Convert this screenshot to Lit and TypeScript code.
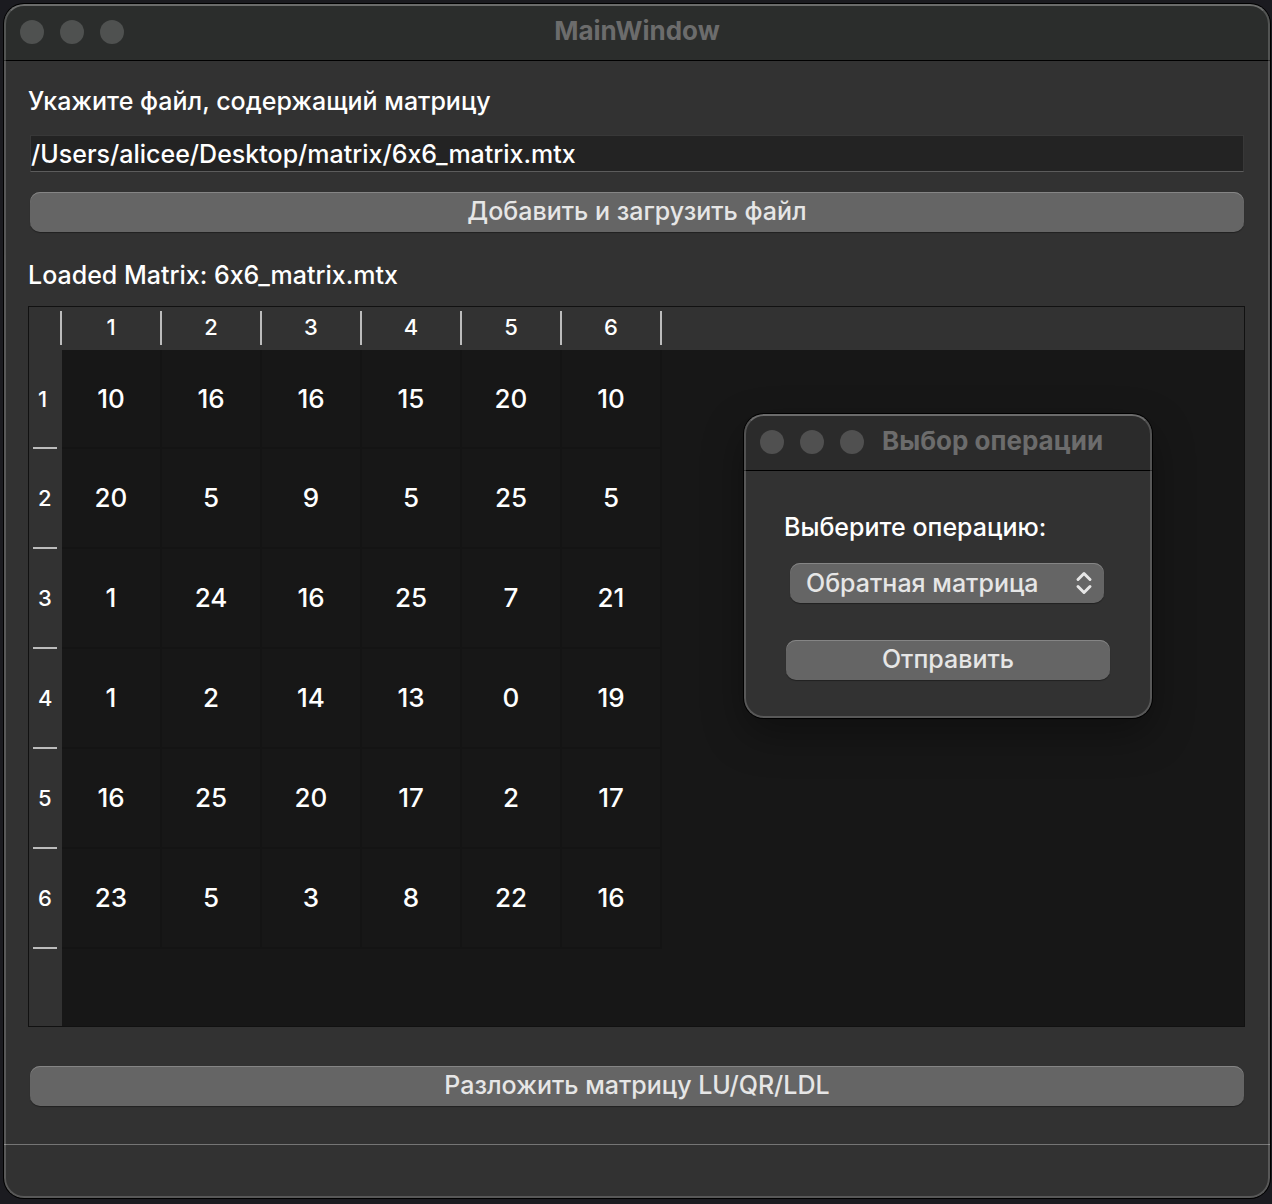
import { LitElement, html, css } from "lit";
import { customElement, state } from "lit/decorators.js";

const chrome = css`
  * {
    box-sizing: border-box;
  }
  .window {
    position: relative;
    display: flex;
    flex-direction: column;
    overflow: hidden;
    border-radius: 20px;
    background: #323232;
  }
  .window::after {
    content: "";
    position: absolute;
    inset: 0;
    border: 2px solid rgba(255, 255, 255, 0.19);
    border-top-color: rgba(255, 255, 255, 0.3);
    border-radius: 20px;
    pointer-events: none;
  }
  .titlebar {
    display: grid;
    align-items: center;
    height: 57px;
    padding: 0 16px;
    border-bottom: 1px solid #000;
    background: #2b2b2b;
  }
  .lights {
    display: flex;
    gap: 16px;
  }
  .light {
    width: 24px;
    height: 24px;
    border-radius: 50%;
    background: #505050;
  }
  .title {
    margin: 0;
    padding-bottom: 2px;
    font-size: 26px;
    line-height: 32px;
    font-weight: 700;
    color: #6c6c6c;
    white-space: nowrap;
  }
  .push {
    display: block;
    width: 100%;
    height: 40px;
    margin: 0;
    padding: 0 0 2px;
    border: 0;
    border-radius: 10px;
    background: #656565;
    box-shadow: inset 0 1px 0 #858585, 0 1px 1px rgba(0, 0, 0, 0.35);
    color: #e6e6e6;
    font: inherit;
    text-align: center;
  }
`;

@customElement("matrix-table")
class MatrixTable extends LitElement {
  static properties = { rows: { attribute: false } };
  declare rows: number[][];

  static styles = css`
    :host {
      display: flex;
      flex: 1;
      border: 1px solid #111;
      background: #171717;
    }
    table {
      width: 100%;
      table-layout: fixed;
      border-collapse: separate;
      border-spacing: 0;
    }
    th,
    td {
      padding: 0;
      box-sizing: border-box;
    }
    th {
      background-color: #323232;
      background-repeat: no-repeat;
      font-size: 22px;
      line-height: 28px;
      font-weight: 500;
    }
    .corner {
      width: 33px;
    }
    .column {
      width: 100px;
    }
    .corner,
    .column {
      height: 43px;
      padding: 0 2px 4px 0;
      background-image: linear-gradient(#bcbcbc, #bcbcbc);
      background-size: 2px 34px;
      background-position: right 4px;
    }
    .row {
      height: 100px;
      padding: 0 0 2px 9px;
      text-align: left;
      background-image: linear-gradient(#bcbcbc, #bcbcbc);
      background-size: 24px 2px;
      background-position: 4px bottom;
    }
    tr:first-child > .row {
      height: 99px;
    }
    .value {
      border: 0 solid #141414;
      border-width: 0 2px 2px 0;
      text-align: center;
      font-size: 26px;
    }
  `;

  render() {
    return html`<table>
      <thead>
        <tr>
          <th class="corner"></th>
          ${this.rows[0].map((_, i) => html`<th class="column" scope="col">${i + 1}</th>`)}
          <th></th>
        </tr>
      </thead>
      <tbody>
        ${this.rows.map(
          (row, i) => html`<tr>
            <th class="row" scope="row">${i + 1}</th>
            ${row.map((v) => html`<td class="value">${v}</td>`)}
            <td></td>
          </tr>`
        )}
        <tr>
          <th></th>
          <td colspan=${this.rows[0].length + 1}></td>
        </tr>
      </tbody>
    </table>`;
  }
}

@customElement("operation-dialog")
class OperationDialog extends LitElement {
  static styles = [
    chrome,
    css`
      :host {
        display: block;
        border-radius: 20px;
        box-shadow: 0 0 0 1px #000, 0 16px 40px rgba(0, 0, 0, 0.35);
      }
      .titlebar {
        grid-template-columns: auto 1fr;
        column-gap: 18px;
      }
      .body {
        padding: 40px 42px 38px;
      }
      .label {
        display: block;
        margin-left: -2px;
        line-height: 32px;
      }
      .picker {
        display: grid;
        align-items: center;
        margin: 20px 6px 37px 4px;
      }
      .select {
        grid-area: 1 / 1;
        appearance: none;
        padding: 0 48px 0 16px;
        text-align: left;
      }
      .arrows {
        grid-area: 1 / 1;
        justify-self: end;
        width: 18px;
        height: 24px;
        margin-right: 11px;
        fill: none;
        stroke: #e6e6e6;
        stroke-width: 3;
        stroke-linecap: round;
        stroke-linejoin: round;
        pointer-events: none;
      }
    `,
  ];

  render() {
    return html`<section class="window">
      <header class="titlebar">
        <div class="lights">
          <span class="light"></span><span class="light"></span><span class="light"></span>
        </div>
        <h2 class="title">Выбор операции</h2>
      </header>
      <div class="body">
        <label class="label" for="operation">Выберите операцию:</label>
        <div class="picker">
          <select class="push select" id="operation">
            <option>Обратная матрица</option>
          </select>
          <svg class="arrows" viewBox="0 0 18 24" aria-hidden="true">
            <path d="M3 8.5 9 2.5 15 8.5M3 15.5 9 21.5 15 15.5" />
          </svg>
        </div>
        <button class="push" type="button">Отправить</button>
      </div>
    </section>`;
  }
}

@customElement("app-root")
class AppRoot extends LitElement {
  static styles = [
    chrome,
    css`
      :host {
        display: flex;
        box-sizing: border-box;
        min-height: 100vh;
        padding: 4px 2px 6px 4px;
        background: #1b1b20;
        color: #fff;
        font-family: Inter, "Liberation Sans", sans-serif;
        font-size: 25px;
        font-weight: 500;
        font-feature-settings: "calt" 0;
        line-height: 32px;
      }
      .main {
        flex: 1;
        box-shadow: 0 0 0 1px #000;
      }
      .main > .titlebar {
        grid-template-columns: 1fr auto 1fr;
        background: #2b2d2c;
      }
      .main > .titlebar .light {
        background: #4f5150;
      }
      .content {
        display: flex;
        flex: 1;
        flex-direction: column;
        padding: 24px 25px 38px 24px;
      }
      .inset {
        margin: 0 1px 0 2px;
      }
      .path {
        display: block;
        width: 100%;
        height: 37px;
        margin: 18px 0 20px;
        padding: 0;
        border: 1px solid #383838;
        border-bottom-color: #5c5c5c;
        border-radius: 0;
        background: #232323;
        color: #fff;
        font: inherit;
        outline: none;
      }
      .caption {
        margin: 27px 0 15px;
      }
      .action {
        margin-top: 39px;
      }
      .status {
        height: 54px;
        border-top: 1px solid #757575;
      }
      .dialog {
        position: absolute;
        left: 740px;
        top: 410px;
        width: 408px;
      }
    `,
  ];

  @state() path = "/Users/alicee/Desktop/matrix/6x6_matrix.mtx";

  rows = [
    [10, 16, 16, 15, 20, 10],
    [20, 5, 9, 5, 25, 5],
    [1, 24, 16, 25, 7, 21],
    [1, 2, 14, 13, 0, 19],
    [16, 25, 20, 17, 2, 17],
    [23, 5, 3, 8, 22, 16],
  ];

  render() {
    return html`<main class="window main">
      <header class="titlebar">
        <div class="lights">
          <span class="light"></span><span class="light"></span><span class="light"></span>
        </div>
        <h1 class="title">MainWindow</h1>
      </header>
      <div class="content">
        <label for="path">Укажите файл, содержащий матрицу</label>
        <div class="inset">
          <input class="path" id="path" type="text" spellcheck="false" .value=${this.path} />
          <button class="push" type="button">Добавить и загрузить файл</button>
        </div>
        <div class="caption">Loaded Matrix: 6x6_matrix.mtx</div>
        <matrix-table .rows=${this.rows}></matrix-table>
        <div class="inset action">
          <button class="push" type="button">Разложить матрицу LU/QR/LDL</button>
        </div>
      </div>
      <footer class="status"></footer>
      <operation-dialog class="dialog"></operation-dialog>
    </main>`;
  }
}
